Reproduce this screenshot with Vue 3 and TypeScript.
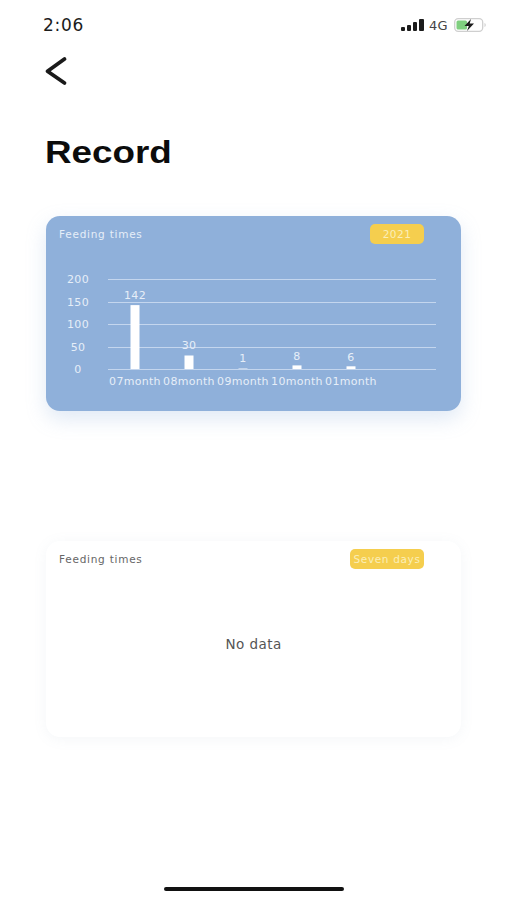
<script setup lang="ts">
interface Bar { month: string; value: number; labelY: number }

const chartBaseY = 125
const chartTopY = 35
const maxValue = 200
const ticks: number[] = [200, 150, 100, 50, 0]
const bars: Bar[] = [
  { month: '07month', value: 142, labelY: 55 },
  { month: '08month', value: 30, labelY: 105 },
  { month: '09month', value: 1, labelY: 118 },
  { month: '10month', value: 8, labelY: 116 },
  { month: '01month', value: 6, labelY: 117 },
]
const rawY = (t: number): number => chartBaseY - (t / maxValue) * (chartBaseY - chartTopY)
const tickY = (t: number): number => Math.round(rawY(t)) + 0.5
const barX = (i: number): number => 89 + i * 54
const barH = (v: number): number => (v / maxValue) * (chartBaseY - chartTopY)
</script>

<template>
  <div class="screen">
    <header class="status">
      <span class="time">2:06</span>
      <div class="status-right">
        <svg class="signal" width="24" height="12" viewBox="0 0 24 12">
          <rect x="0" y="8" width="4" height="4" rx="1" />
          <rect x="6" y="6" width="4" height="6" rx="1" />
          <rect x="12" y="3" width="4" height="9" rx="1" />
          <rect x="18" y="0" width="5" height="12" rx="1" />
        </svg>
        <span class="net">4G</span>
        <svg class="battery" width="32" height="14" viewBox="0 0 32 14">
          <rect x="0.7" y="0.7" width="28" height="12.6" rx="3.5" fill="none" stroke="#cfcfcf" stroke-width="1.3" />
          <rect x="2.5" y="2.5" width="10.5" height="9" rx="1.5" fill="#7fcf7f" />
          <path d="M30.5 5v4c.8-.3 1.200-1 1.200-2s-.4-1.700-1.200-2z" fill="#cfcfcf" />
          <path d="M17 1 10.500 8h4.300L13 13l7-7.500h-4.300z" fill="#1c1c1c" />
        </svg>
      </div>
    </header>

    <button class="back" type="button" aria-label="Back">
      <svg width="24" height="30" viewBox="0 0 24 30">
        <path d="M20.500 3 3.500 15.200 20.500 27" fill="none" stroke="#1a1a1a" stroke-width="3.800" stroke-linecap="round" stroke-linejoin="round" />
      </svg>
    </button>

    <h1 class="title">Record</h1>

    <section class="card card-blue">
      <div class="card-head">
        <span class="card-title">Feeding times</span>
        <span class="badge badge-year">2021</span>
      </div>
      <svg class="chart" width="415" height="167" viewBox="0 0 415 167">
        <g v-for="t in ticks" :key="t">
          <line x1="62" x2="390" :y1="tickY(t)" :y2="tickY(t)" stroke="#c4d6ee" stroke-width="1" />
          <text class="chart-text" x="32" :y="rawY(t) + 4" text-anchor="middle">{{ t }}</text>
        </g>
        <g v-for="(b, i) in bars" :key="b.month">
          <rect :x="barX(i) - 4.500" :y="chartBaseY - barH(b.value)" width="9" :height="barH(b.value)" fill="#fff" />
          <text class="chart-text" :x="barX(i)" :y="b.labelY" text-anchor="middle">{{ b.value }}</text>
          <text class="chart-text" :x="barX(i)" y="141" text-anchor="middle">{{ b.month }}</text>
        </g>
      </svg>
    </section>

    <section class="card card-white">
      <div class="card-head">
        <span class="card-title dark">Feeding times</span>
        <span class="badge badge-range">Seven days</span>
      </div>
      <div class="empty">No data</div>
    </section>

    <div class="home-bar"></div>
  </div>
</template>

<style>
html, body { margin: 0; background: #fff; }
</style>

<style scoped>
.screen {
  width: 507px;
  height: 900px;
  display: flex;
  flex-direction: column;
  background: #fff;
  font-family: "DejaVu Sans", "Liberation Sans", sans-serif;
  overflow: hidden;
  box-sizing: border-box;
}
.status {
  display: flex;
  justify-content: space-between;
  align-items: center;
  height: 20px;
  margin-top: 15px;
  padding: 0 21px 0 43px;
}
.time {
  font-size: 17px;
  letter-spacing: 0.700px;
  color: #1c1c1c;
}
.status-right {
  display: flex;
  align-items: center;
}
.signal { fill: #1c1c1c; }
.net {
  font-size: 13px;
  letter-spacing: 0.300px;
  color: #444;
  margin: 0 6px 0 4px;
}
.back {
  align-self: flex-start;
  margin: 21px 0 0 44px;
  padding: 0;
  border: 0;
  background: none;
  height: 30px;
}
.back svg { display: block; }
.title {
  margin: 47px 0 0 45px;
  font-family: "Liberation Sans", sans-serif;
  font-weight: 700;
  font-size: 32px;
  line-height: 38px;
  color: #0c0c0c;
  transform: scaleX(1.150);
  transform-origin: left center;
}
.card {
  width: 415px;
  margin-left: 46px;
  border-radius: 14px;
  box-sizing: border-box;
}
.card-blue {
  margin-top: 45px;
  height: 195px;
  background: #8fb0da;
  box-shadow: 0 8px 20px rgba(143, 176, 218, 0.28);
}
.card-white {
  margin-top: 130px;
  height: 196px;
  background: #fff;
  box-shadow: 0 2px 14px rgba(120, 140, 170, 0.08);
  display: flex;
  flex-direction: column;
}
.card-head {
  display: flex;
  justify-content: space-between;
  align-items: center;
  height: 20px;
  padding: 8px 37px 0 13px;
}
.card-title {
  font-size: 10.500px;
  letter-spacing: 0.750px;
  color: #e6eef8;
}
.card-title.dark { color: #666; }
.badge {
  height: 20px;
  line-height: 20px;
  text-align: center;
  background: #f5ce4e;
  color: #fbeeb8;
  font-size: 10.500px;
  border-radius: 5px;
}
.badge-year { width: 54px; letter-spacing: 0.500px; }
.badge-range { width: 74px; letter-spacing: 0.650px; }
.chart {
  display: block;
}
.chart-text {
  font-family: "DejaVu Sans", sans-serif;
  font-size: 11px;
  letter-spacing: 0.300px;
  fill: #e6eef8;
}
.empty {
  margin-top: 67px;
  text-align: center;
  font-size: 13.500px;
  letter-spacing: 0.450px;
  color: #555;
}
.home-bar {
  width: 180px;
  height: 4px;
  margin: auto 0 9px 164px;
  border-radius: 2px;
  background: #111;
}
</style>
